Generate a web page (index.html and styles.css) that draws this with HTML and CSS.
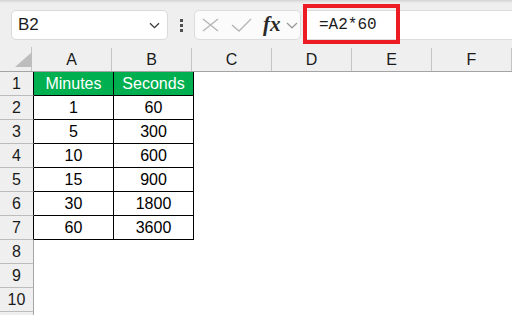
FILE: index.html
```html
<!DOCTYPE html>
<html lang="en">
<head>
<meta charset="utf-8">
<title>Minutes to Seconds</title>
<link rel="stylesheet" href="styles.css">
</head>
<body>
<div class="app">
  <div class="toolbar">
    <div class="namebox">
      <span class="ref">B2</span>
      <svg class="chev" width="11" height="7" viewBox="0 0 11 7"><path d="M1 1.2 L5.5 5.6 L10 1.2" fill="none" stroke="#3a3a3a" stroke-width="1.3"/></svg>
    </div>
    <div class="grip"><i></i><i></i><i></i></div>
    <div class="fxtools">
      <svg class="ico" width="17" height="14" viewBox="0 0 17 14"><path d="M1 1 L16 13 M16 1 L1 13" fill="none" stroke="#b4b4b4" stroke-width="1.3"/></svg>
      <svg class="ico check" width="21" height="14" viewBox="0 0 21 14"><path d="M1 7 L8 13 L20 1" fill="none" stroke="#b4b4b4" stroke-width="1.3"/></svg>
      <span class="fx">fx</span>
      <svg class="chev small" width="12" height="7" viewBox="0 0 12 7"><path d="M1 1 L6 5.8 L11 1" fill="none" stroke="#9a9a9a" stroke-width="1.2"/></svg>
    </div>
    <div class="formula">
      <span class="formula-text">=A2*60</span>
      <span class="highlight"></span>
    </div>
  </div>

  <div class="sheet">
    <div class="row head-row">
      <div class="corner"><span class="tri"></span></div>
      <div class="colhead">A</div>
      <div class="colhead">B</div>
      <div class="colhead">C</div>
      <div class="colhead">D</div>
      <div class="colhead">E</div>
      <div class="colhead">F</div>
    </div>
    <div class="row">
      <div class="rowhead in-table">1</div>
      <div class="cell tbl th">Minutes</div>
      <div class="cell tbl th">Seconds</div>
      <div class="cell"></div><div class="cell"></div><div class="cell"></div><div class="cell"></div>
    </div>
    <div class="row">
      <div class="rowhead in-table">2</div>
      <div class="cell tbl">1</div><div class="cell tbl">60</div>
      <div class="cell"></div><div class="cell"></div><div class="cell"></div><div class="cell"></div>
    </div>
    <div class="row">
      <div class="rowhead in-table">3</div>
      <div class="cell tbl">5</div><div class="cell tbl">300</div>
      <div class="cell"></div><div class="cell"></div><div class="cell"></div><div class="cell"></div>
    </div>
    <div class="row">
      <div class="rowhead in-table">4</div>
      <div class="cell tbl">10</div><div class="cell tbl">600</div>
      <div class="cell"></div><div class="cell"></div><div class="cell"></div><div class="cell"></div>
    </div>
    <div class="row">
      <div class="rowhead in-table">5</div>
      <div class="cell tbl">15</div><div class="cell tbl">900</div>
      <div class="cell"></div><div class="cell"></div><div class="cell"></div><div class="cell"></div>
    </div>
    <div class="row">
      <div class="rowhead in-table">6</div>
      <div class="cell tbl">30</div><div class="cell tbl">1800</div>
      <div class="cell"></div><div class="cell"></div><div class="cell"></div><div class="cell"></div>
    </div>
    <div class="row">
      <div class="rowhead in-table">7</div>
      <div class="cell tbl">60</div><div class="cell tbl">3600</div>
      <div class="cell"></div><div class="cell"></div><div class="cell"></div><div class="cell"></div>
    </div>
    <div class="row">
      <div class="rowhead">8</div>
      <div class="cell"></div><div class="cell"></div><div class="cell"></div><div class="cell"></div><div class="cell"></div><div class="cell"></div>
    </div>
    <div class="row">
      <div class="rowhead">9</div>
      <div class="cell"></div><div class="cell"></div><div class="cell"></div><div class="cell"></div><div class="cell"></div><div class="cell"></div>
    </div>
    <div class="row">
      <div class="rowhead">10</div>
      <div class="cell"></div><div class="cell"></div><div class="cell"></div><div class="cell"></div><div class="cell"></div><div class="cell"></div>
    </div>
    <div class="row">
      <div class="rowhead"></div>
      <div class="cell"></div><div class="cell"></div><div class="cell"></div><div class="cell"></div><div class="cell"></div><div class="cell"></div>
    </div>
  </div>
</div>
</body>
</html>
```

FILE: styles.css
```css
* { box-sizing: border-box; }

html, body {
  margin: 0;
  padding: 0;
  background: #fff;
}

.app {
  width: 512px;
  height: 315px;
  overflow: hidden;
  font-family: "Liberation Sans", Arial, sans-serif;
  font-size: 16px;
  color: #000;
}

/* ---- formula bar ---- */
.toolbar {
  height: 47px;
  display: flex;
  align-items: flex-start;
  padding: 10px 0 0 11px;
  background: linear-gradient(#d2d2d2 0px, #e6e6e6 2px, #efefef 4px, #efefef 100%);
}

.namebox {
  width: 157px;
  height: 30px;
  background: #fff;
  border: 1px solid #d9d9d9;
  border-radius: 5px;
  display: flex;
  align-items: center;
  justify-content: space-between;
  padding: 0 7px 0 6px;
}

.ref {
  font-size: 17px;
  color: #1b1b1b;
}

.grip {
  width: 26px;
  height: 30px;
  display: flex;
  flex-direction: column;
  align-items: center;
  justify-content: center;
  gap: 2px;
}

.grip i {
  display: block;
  width: 3px;
  height: 3px;
  background: #505050;
}

.fxtools {
  width: 107px;
  height: 30px;
  background: #fbfbfb;
  border: 1px solid #dcdcdc;
  border-radius: 5px;
  display: flex;
  align-items: center;
  padding-left: 7px;
}

.fxtools .check { margin-left: 12px; }

.fx {
  margin-left: 11px;
  font-family: "Liberation Serif", "Times New Roman", serif;
  font-style: italic;
  font-weight: bold;
  font-size: 21px;
  color: #2a2a2a;
  line-height: 1;
  margin-top: -2px;
}

.chev.small { margin-left: 5px; }

.formula {
  position: relative;
  flex: 1;
  height: 30px;
  margin-left: 2px;
  background: #fff;
  border: 1px solid #dcdcdc;
  border-right: none;
  border-radius: 5px 0 0 5px;
  display: flex;
  align-items: center;
  padding-left: 15px;
}

.formula-text {
  font-family: "Liberation Mono", "DejaVu Sans Mono", monospace;
  font-size: 16px;
  color: #1c1c1c;
}

/* red annotation frame drawn over the formula text */
.highlight {
  position: absolute;
  left: -1px;
  top: -7px;
  width: 97px;
  height: 40px;
  border: 4px solid #ed1c24;
}

/* ---- grid ---- */
.sheet {
  display: flex;
  flex-direction: column;
}

.row {
  display: flex;
  height: 24px;
}

.head-row {
  height: 25px;
  background: #efefef;
  border-bottom: 1px solid #a4a4a4;
}

.corner {
  position: relative;
  width: 34px;
  border-right: 1px solid #c4c4c4;
}

.tri {
  position: absolute;
  left: 15px;
  top: 5px;
  width: 0;
  height: 0;
  border-left: 17px solid transparent;
  border-bottom: 15px solid #bdbdbd;
}

.colhead {
  width: 80px;
  flex: none;
  border-right: 1px solid #c4c4c4;
  display: flex;
  align-items: center;
  justify-content: center;
  font-size: 16px;
  color: #1a1a1a;
  margin-top: 1px;
}

.rowhead {
  width: 34px;
  flex: none;
  background: #efefef;
  border-right: 1px solid #a4a4a4;
  border-bottom: 1px solid #bcbcbc;
  display: flex;
  align-items: center;
  justify-content: center;
  font-size: 16px;
  color: #1a1a1a;
}

.rowhead.in-table { border-right-color: #000; }

.cell {
  width: 80px;
  flex: none;
  display: flex;
  align-items: center;
  justify-content: center;
  background: #fff;
}

.cell.tbl {
  border-right: 1px solid #000;
  border-bottom: 1px solid #000;
}

.cell.th {
  background: #00b050;
  color: #fff;
}
```
